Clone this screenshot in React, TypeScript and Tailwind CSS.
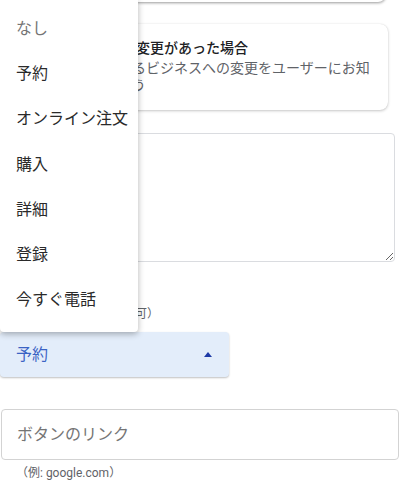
import { useState } from 'react';

const OPTIONS = ['なし', '予約', 'オンライン注文', '購入', '詳細', '登録', '今すぐ電話'];

function CaretUp() {
  return (
    <svg width="8" height="5" viewBox="0 0 8 5" className="text-[#1d3aa6]">
      <path d="M0 5 L4 0 L8 5 Z" fill="currentColor" />
    </svg>
  );
}

export default function App() {
  const [selected, setSelected] = useState('予約');
  const [isOpen, setIsOpen] = useState(true);

  return (
    <div className="relative h-[485px] w-[400px] overflow-hidden bg-white font-['Roboto','Noto_Sans_CJK_JP',sans-serif] text-[#202124]">
      {/* bottom edge of the card above */}
      <div className="mx-[14px] -mt-[30px] h-[32px] rounded-lg bg-white shadow-[0_1px_3px_rgba(0,0,0,0.4)]" />

      <div className="ml-[12px] mr-[12px] mt-[22px] rounded-lg bg-white pb-[16px] pl-[36px] pr-3 pt-[14px] shadow-[0_1px_3px_rgba(0,0,0,0.22),0_0_1px_rgba(0,0,0,0.12)]">
        <div className="whitespace-nowrap pl-[4px] text-[14px] font-medium leading-5">お店の情報に変更があった場合</div>
        <div className="mt-[2px] whitespace-nowrap text-[14px] leading-[17px] text-[#5f6368]">
          <div>お店に関連するビジネスへの変更をユーザーにお知</div>
          <div>らせしましょう</div>
        </div>
      </div>

      <textarea className="mx-px mt-[23px] block h-[129px] w-[394px] rounded-[4px] border border-[#dadce0] bg-white outline-none" />

      <div className="mt-[44px] pl-[27px] text-[12px] leading-4 text-[#5f6368]">ボタンを追加（省略可）</div>

      <button
        type="button"
        onClick={() => setIsOpen((v) => !v)}
        className="mt-[10px] flex h-[45px] w-[229px] items-center justify-between rounded-[4px] bg-[#e3edfa] pl-4 pr-[17px] text-[16px] text-[#3b63c4] shadow-[0_1px_2px_rgba(0,0,0,0.25)]"
      >
        <span>{selected}</span>
        <CaretUp />
      </button>

      <div className="mx-px mt-[32px] flex h-[51px] items-center rounded-[4px] border border-[#d3d3d3] px-[15px]">
        <input
          type="text"
          placeholder="ボタンのリンク"
          className="w-full bg-transparent text-[16px] outline-none placeholder:text-[#757575]"
        />
      </div>
      <div className="mt-[5px] pl-[16px] text-[12px] leading-4 text-[#5f6368]">（例: google.com）</div>

      {isOpen && (
        <div className="absolute left-0 top-0 h-[332px] w-[138px] rounded-b-[4px] bg-white pt-[6px] shadow-[0_2px_6px_rgba(0,0,0,0.3)]">
          {OPTIONS.map((option, i) => (
            <div
              key={option}
              onClick={() => {
                setSelected(option);
                setIsOpen(false);
              }}
              className={`flex h-[45.3px] cursor-pointer items-center whitespace-nowrap pl-4 text-[16px] ${
                i === 0 ? 'text-[#757575]' : 'text-[#2a2a2a]'
              }`}
            >
              {option}
            </div>
          ))}
        </div>
      )}
    </div>
  );
}
